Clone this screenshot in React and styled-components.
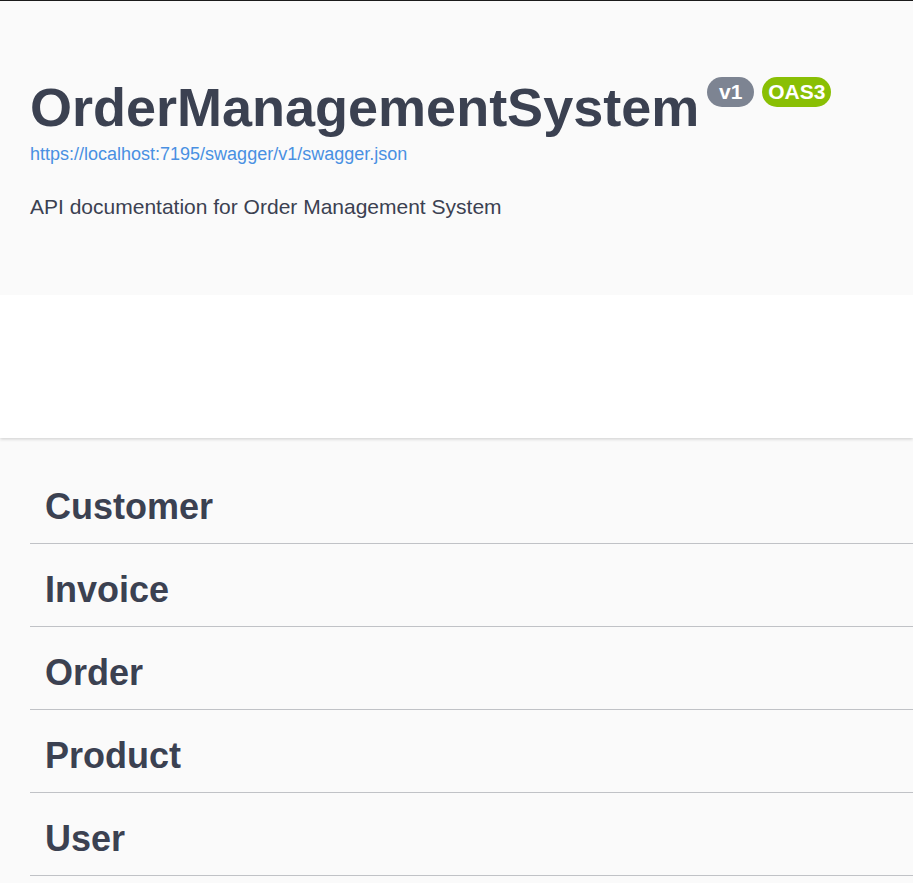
import React from "react";
import styled, { createGlobalStyle } from "styled-components";

const GlobalStyle = createGlobalStyle`
  html, body {
    margin: 0;
    padding: 0;
    background: #fafafa;
  }
  body {
    font-family: "Liberation Sans", Arial, sans-serif;
    color: #3b4151;
  }
`;

const tags = ["Customer", "Invoice", "Order", "Product", "User"];

function App() {
  return (
    <>
      <GlobalStyle />
      <Page>
        <InfoSection>
          <TitleRow>
            <Title>OrderManagementSystem</Title>
            <Badge>{" v1 "}</Badge>
            <Badge $color="#89bf04">OAS3</Badge>
          </TitleRow>
          <SpecLink href="#">https://localhost:7195/swagger/v1/swagger.json</SpecLink>
          <Description>API documentation for Order Management System</Description>
        </InfoSection>
        <SchemeContainer />
        <TagList>
          {tags.map((tag) => (
            <TagRow key={tag}>
              <TagName>{tag}</TagName>
            </TagRow>
          ))}
        </TagList>
      </Page>
    </>
  );
}
export default App;

const Page = styled.div`
  border-top: 1px solid #1b1b1b;
  min-height: 882px;
  overflow: hidden;
`;

const InfoSection = styled.div`
  display: flex;
  flex-direction: column;
  align-items: flex-start;
  padding: 75px 30px 75px 30px;
  height: 144px;
`;

const TitleRow = styled.div`
  display: flex;
  align-items: flex-start;
  gap: 8px;
`;

const Title = styled.h2`
  margin: 0;
  font-size: 54px;
  line-height: 62px;
  font-weight: 700;
  color: #3b4151;
`;

const Badge = styled.span`
  margin-top: 1px;
  display: inline-flex;
  align-items: center;
  height: 30px;
  padding: 0 6px;
  border-radius: 85px;
  background: ${(p) => p.$color || "#7d8492"};
  color: #fff;
  font-size: 21px;
  font-weight: 700;
  white-space: pre;
`;

const SpecLink = styled.a`
  margin-top: 6px;
  font-size: 18px;
  line-height: 21px;
  color: #4990e2;
  text-decoration: none;
`;

const Description = styled.p`
  margin: 30px 0 0;
  font-size: 21px;
  line-height: 24px;
  color: #3b4151;
`;

const SchemeContainer = styled.div`
  height: 143px;
  background: #fff;
  box-shadow: 0 1.5px 3px 0 rgba(0, 0, 0, 0.15);
`;

const TagList = styled.div`
  display: flex;
  flex-direction: column;
  padding: 31px 0 0 30px;
`;

const TagRow = styled.div`
  display: flex;
  align-items: center;
  height: 73px;
  padding: 1px 30px 0 15px;
  margin-bottom: 8px;
  border-bottom: 1px solid rgba(59, 65, 81, 0.3);
`;

const TagName = styled.h3`
  margin: 0;
  font-size: 36px;
  line-height: 41px;
  font-weight: 700;
  color: #3b4151;
`;
